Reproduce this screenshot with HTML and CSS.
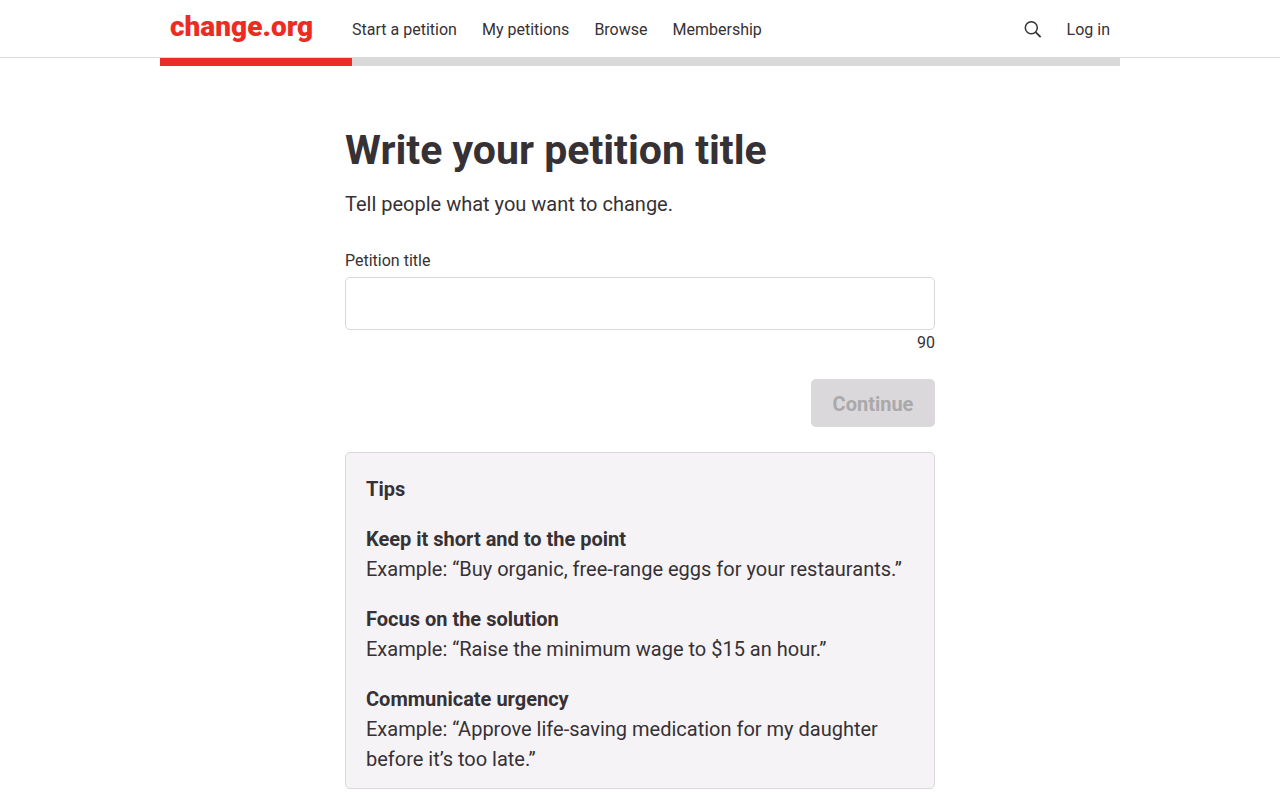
FILE: index.html
```html
<!DOCTYPE html>
<html lang="en">
<head>
  <meta charset="UTF-8">
  <meta name="viewport" content="width=device-width, initial-scale=1.0">
  <title>Start a petition · Change.org</title>
  <link rel="stylesheet" href="styles.css">
</head>
<body>
  <header class="site-header">
    <div class="wrap header-row">
      <a class="logo" href="#">change.org</a>
      <nav class="nav">
        <a href="#">Start a petition</a>
        <a href="#">My petitions</a>
        <a href="#">Browse</a>
        <a href="#">Membership</a>
      </nav>
      <div class="nav nav-right">
        <a class="search" href="#" aria-label="Search">
          <svg width="18" height="18" viewBox="0 0 18 18" fill="none" stroke="currentColor" stroke-width="1.5">
            <circle cx="7.3" cy="6.8" r="6"/>
            <path d="M11.6 11.1l5 5" stroke-width="1.8"/>
          </svg>
        </a>
        <a href="#">Log in</a>
      </div>
    </div>
  </header>
  <div class="wrap progress">
    <div class="progress-bar"></div>
  </div>
  <main class="content">
    <h1>Write your petition title</h1>
    <p class="lead">Tell people what you want to change.</p>
    <form>
      <label for="title">Petition title</label>
      <input type="text" id="title" maxlength="90">
      <div class="count">90</div>
      <div class="actions">
        <button type="submit" disabled>Continue</button>
      </div>
    </form>
    <section class="tips">
      <h2>Tips</h2>
      <h3>Keep it short and to the point</h3>
      <p>Example: “Buy organic, free-range eggs for your restaurants.”</p>
      <h3>Focus on the solution</h3>
      <p>Example: “Raise the minimum wage to $15 an hour.”</p>
      <h3>Communicate urgency</h3>
      <p>Example: “Approve life-saving medication for my daughter before it’s too late.”</p>
    </section>
  </main>
</body>
</html>
```
FILE: styles.css
```css
* {
  box-sizing: border-box;
}
body {
  margin: 0;
  font-family: Roboto, "Liberation Sans", sans-serif;
  font-size: 20px;
  line-height: 30px;
  color: #363135;
  background: #fff;
}
h1, h2, h3, p {
  margin: 0;
}
a {
  color: inherit;
  text-decoration: none;
}
.wrap {
  max-width: 960px;
  margin: 0 auto;
}
.site-header {
  border-bottom: 1px solid #dad8da;
}
.header-row {
  display: flex;
  align-items: center;
  height: 57px;
  padding: 0 10px;
}
.logo {
  padding-bottom: 4px;
  font-size: 28px;
  font-weight: 900;
  color: #ec2c22;
  margin-right: 39px;
}
.nav {
  display: flex;
  align-items: center;
  gap: 25px;
  padding-top: 2px;
  font-size: 16px;
  line-height: 24px;
}
.nav-right {
  margin-left: auto;
}
.search svg {
  display: block;
}
.progress {
  background: #dad9da;
}
.progress-bar {
  width: 20%;
  height: 8px;
  background: #ec2c22;
}
.content {
  max-width: 610px;
  margin: 0 auto;
  padding: 59px 10px 10px;
}
h1 {
  font-size: 41px;
  line-height: 50px;
  margin-bottom: 14px;
}
.lead {
  margin-bottom: 30px;
}
label {
  display: block;
  font-size: 16px;
  line-height: 24px;
  margin-bottom: 4px;
}
input {
  display: block;
  width: 100%;
  height: 53px;
  padding: 10px;
  font: inherit;
  color: inherit;
  background: #fff;
  border: 1px solid #dad8da;
  border-radius: 5px;
}
.count {
  padding-top: 1px;
  font-size: 16px;
  line-height: 24px;
  text-align: right;
}
.actions {
  display: flex;
  justify-content: flex-end;
  margin: 24px 0 25px;
}
button {
  min-width: 124px;
  height: 48px;
  padding: 1px 19px 0;
  font: inherit;
  font-weight: bold;
  color: #aaa8aa;
  background: #dad8da;
  border: 0;
  border-radius: 5px;
}
.tips {
  padding: 21px 20px 14px;
  background: #f5f3f6;
  border: 1px solid #dad8da;
  border-radius: 5px;
}
h2,
h3 {
  font-size: 20px;
  line-height: 30px;
}
h3 {
  margin-top: 20px;
}
```
